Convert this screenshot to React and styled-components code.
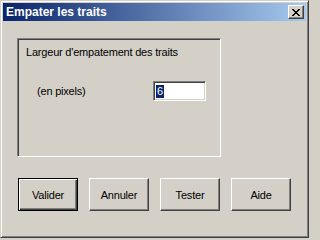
import React from "react";
import styled, { createGlobalStyle } from "styled-components";

const GlobalStyle = createGlobalStyle`
  html, body {
    margin: 0;
    padding: 0;
    background: #d4d0c8;
  }
  * {
    box-sizing: border-box;
  }
`;

function App() {
  return (
    <>
      <GlobalStyle />
      <Window>
        <TitleBar>
          <Title>Empater les traits</Title>
          <CloseButton aria-label="Fermer">
            <svg width="8" height="7" viewBox="0 0 8 7">
              <path
                d="M0 0h2v1h1v1h2V1h1V0h2v1H7v1H6v1H5v1h1v1h1v1h1v1H6V6H5V5H3v1H2v1H0V6h1V5h1V4h1V3H2V2H1V1H0z"
                fill="#000"
              />
            </svg>
          </CloseButton>
        </TitleBar>
        <Body>
          <GroupBox>
            <Label>Largeur d'empatement des traits</Label>
            <FieldRow>
              <Label>(en pixels)</Label>
              <Input>
                <Selected>6</Selected>
              </Input>
            </FieldRow>
          </GroupBox>
          <ButtonRow>
            <Button $default>Valider</Button>
            <Button>Annuler</Button>
            <Button>Tester</Button>
            <Button>Aide</Button>
          </ButtonRow>
        </Body>
      </Window>
    </>
  );
}

export default App;

const Window = styled.div`
  width: 309px;
  height: 238px;
  display: flex;
  flex-direction: column;
  background: #d4d0c8;
  border: 1px solid;
  border-color: #d4d0c8 #404040 #404040 #d4d0c8;
  box-shadow: inset 1px 1px 0 #ffffff, inset -1px -1px 0 #808080;
  padding: 2px;
  font-family: "Liberation Sans", Arial, sans-serif;
`;

const TitleBar = styled.div`
  height: 18px;
  display: flex;
  align-items: center;
  justify-content: space-between;
  padding: 0 2px 0 3px;
  background: linear-gradient(to right, #0a246a, #a6caf0);
`;

const Title = styled.span`
  color: #ffffff;
  font-weight: bold;
  font-size: 12px;
`;

const CloseButton = styled.button`
  width: 16px;
  height: 14px;
  padding: 0;
  display: flex;
  align-items: center;
  justify-content: center;
  background: #d4d0c8;
  border: 1px solid;
  border-color: #ffffff #404040 #404040 #ffffff;
  box-shadow: inset -1px -1px 0 #808080;
`;

const Body = styled.div`
  flex: 1;
  display: flex;
  flex-direction: column;
  padding: 17px 0 0 14px;
`;

const GroupBox = styled.div`
  width: 204px;
  height: 119px;
  display: flex;
  flex-direction: column;
  padding: 7px 8px;
  border: 1px solid;
  border-color: #808080 #ffffff #ffffff #808080;
  box-shadow: inset 1px 1px 0 #404040, inset -1px -1px 0 #d4d0c8;
`;

const Label = styled.span`
  font-size: 11px;
  line-height: 13px;
  letter-spacing: -0.2px;
  color: #000000;
`;

const FieldRow = styled.div`
  display: flex;
  align-items: center;
  justify-content: space-between;
  margin-top: 22px;
  padding-left: 11px;
  padding-right: 6px;
`;

const Input = styled.div`
  width: 53px;
  height: 20px;
  display: flex;
  align-items: center;
  padding-left: 2px;
  background: #ffffff;
  border: 1px solid;
  border-color: #808080 #ffffff #ffffff #808080;
  box-shadow: inset 1px 1px 0 #404040, inset -1px -1px 0 #d4d0c8;
`;

const Selected = styled.span`
  background: #0a246a;
  color: #ffffff;
  font-size: 11px;
  line-height: 13px;
  padding: 0 1px;
`;

const ButtonRow = styled.div`
  display: flex;
  gap: 11px;
  margin-top: 21px;
  padding-left: 1px;
`;

const Button = styled.button`
  width: 60px;
  height: 33px;
  padding: 0;
  background: #d4d0c8;
  font-family: "Liberation Sans", Arial, sans-serif;
  font-size: 11px;
  letter-spacing: -0.2px;
  color: #000000;
  border: 1px solid;
  border-color: ${(props) =>
    props.$default ? "#000000" : "#ffffff #404040 #404040 #ffffff"};
  box-shadow: ${(props) =>
    props.$default
      ? "inset 1px 1px 0 #ffffff, inset -1px -1px 0 #404040, inset -2px -2px 0 #808080"
      : "inset -1px -1px 0 #808080"};
`;
